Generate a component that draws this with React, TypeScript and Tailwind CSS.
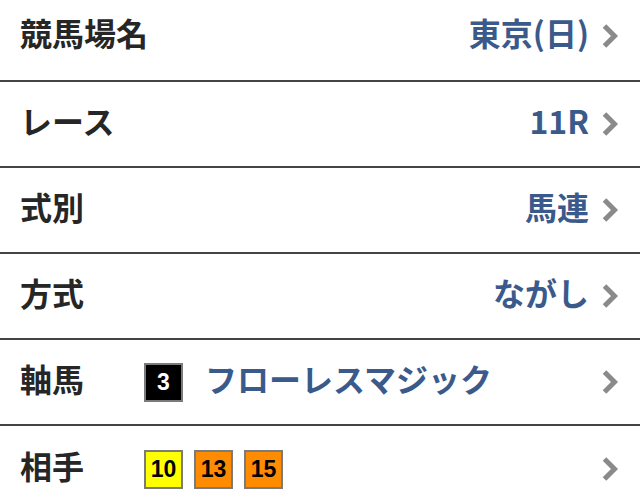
import React from 'react';

const Chevron: React.FC = () => (
  <svg width="18" height="26" viewBox="0 0 18 26" className="shrink-0">
    <path d="M3.5 3 L13.5 13 L3.5 23" fill="none" stroke="#8a8a8a" strokeWidth="5" strokeLinecap="butt" strokeLinejoin="miter" />
  </svg>
);

const Badge: React.FC<{ num: number; color: string; text: string }> = ({ num, color, text }) => (
  <span
    className={`flex h-[39px] w-[39px] items-center justify-center border-2 border-[#7b7b7b] text-[23px] font-bold ${color} ${text}`}
    style={{ fontFamily: '"Liberation Sans", Arial, sans-serif' }}
  >
    {num}
  </span>
);

const rows = [
  { label: '競馬場名', value: '東京(日)' },
  { label: 'レース', value: '11R' },
  { label: '式別', value: '馬連' },
  { label: '方式', value: 'ながし' },
];

const App: React.FC = () => {
  return (
    <div
      className="h-[504px] w-[640px] overflow-hidden bg-white text-[#262626]"
      style={{ fontFamily: '"Noto Sans CJK JP", "Liberation Sans", sans-serif' }}
    >
      {rows.map((row, i) => (
        <div
          key={row.label}
          className={`flex items-center justify-between border-b-2 border-[#444] pl-[20px] pr-[21px] ${i === 0 ? 'h-[82px] pb-[8px]' : 'h-[86px]'}`}
        >
          <span className="mb-[8px] text-[32px] font-bold">{row.label}</span>
          <div className="flex items-center gap-[12px]">
            <span className="mb-[8px] text-[32px] font-bold text-[#3b5a8c]">{row.value}</span>
            <Chevron />
          </div>
        </div>
      ))}

      <div className="flex h-[86px] items-center border-b-2 border-[#444] pl-[20px] pr-[21px]">
        <span className="mb-[8px] w-[124px] text-[32px] font-bold">軸馬</span>
        <Badge num={3} color="bg-black" text="text-white" />
        <span className="mb-[8px] ml-[22px] flex-1 text-[32px] font-bold text-[#3b5a8c]">フローレスマジック</span>
        <Chevron />
      </div>

      <div className="flex h-[86px] items-center pl-[20px] pr-[21px]">
        <span className="mb-[8px] w-[124px] text-[32px] font-bold">相手</span>
        <div className="flex flex-1 gap-[11px]">
          <Badge num={10} color="bg-[#ffff00]" text="text-black" />
          <Badge num={13} color="bg-[#ff8c00]" text="text-black" />
          <Badge num={15} color="bg-[#ff8c00]" text="text-black" />
        </div>
        <Chevron />
      </div>
    </div>
  );
};

export default App;
